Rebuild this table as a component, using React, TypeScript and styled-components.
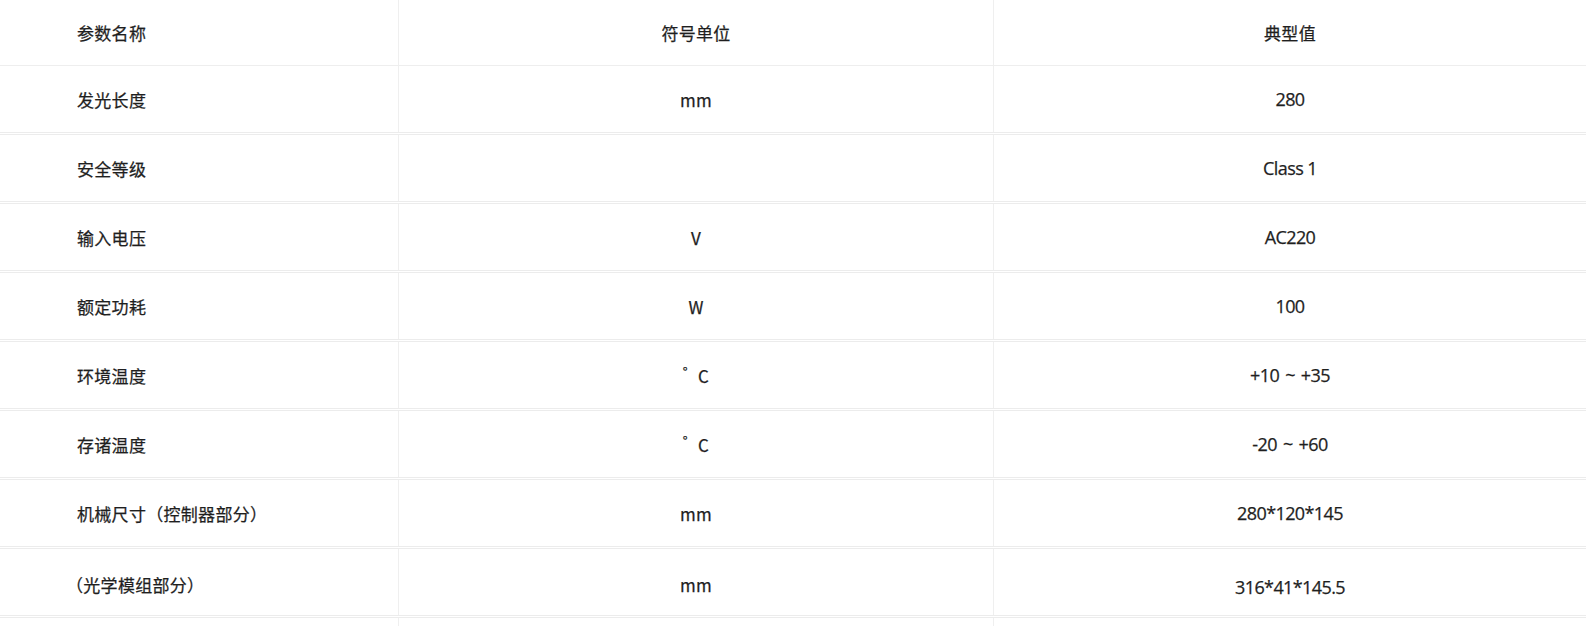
import React from 'react'
import styled, { createGlobalStyle } from 'styled-components'

const GlobalStyle = createGlobalStyle`
  html, body {
    margin: 0;
    padding: 0;
    background: #fff;
  }
  body {
    font-family: "Noto Sans CJK SC", "Noto Sans", sans-serif;
    color: #333;
  }
`

const Table = styled.div`
  width: 100%;
  display: flex;
  flex-direction: column;
`

const Row = styled.div<{ head?: boolean }>`
  display: grid;
  grid-template-columns: 399px 595px 1fr;
  height: ${(p) => (p.head ? '65px' : '66px')};
  border-bottom: ${(p) => (p.head ? '1px solid #eeeeee' : '3px double #ececec')};
`

const Cell = styled.div<{ align?: 'left' | 'center'; latin?: boolean; drop?: number; indent?: number }>`
  display: flex;
  align-items: center;
  justify-content: ${(p) => (p.align === 'left' ? 'flex-start' : 'center')};
  padding-left: ${(p) => (p.align === 'left' ? `${p.indent ?? 77}px` : '0')};
  padding-top: ${(p) => p.drop || 0}px;
  box-sizing: border-box;
  font-size: ${(p) => (p.latin ? '18px' : '17px')};
  font-weight: 400;
  letter-spacing: ${(p) => (p.latin ? '-0.6px' : '0.3px')};
  font-family: ${(p) =>
    p.latin ? '"Open Sans", "Noto Sans CJK SC", sans-serif' : '"Noto Sans CJK SC", "Noto Sans", sans-serif'};
  color: #1f1f1f;
  -webkit-text-stroke: 0.25px #1f1f1f;
  border-right: 1px solid #efefef;
  &:last-child {
    border-right: 0;
  }
`

const Degree = styled.span`
  margin-right: 10px;
  font-size: 13px;
  position: relative;
  top: -4px;
`

const Tilde = styled.span`
  margin: 0 6px;
`

interface Item {
  name: string
  unit: React.ReactNode
  value: React.ReactNode
}

const celsius = (
  <>
    <Degree>°</Degree>C
  </>
)

const range = (a: string, b: string) => (
  <>
    {a}
    <Tilde>~</Tilde>
    {b}
  </>
)

const rows: Item[] = [
  { name: '发光长度', unit: 'mm', value: '280' },
  { name: '安全等级', unit: '', value: 'Class 1' },
  { name: '输入电压', unit: 'V', value: 'AC220' },
  { name: '额定功耗', unit: 'W', value: '100' },
  { name: '环境温度', unit: celsius, value: range('+10', '+35') },
  { name: '存诸温度', unit: celsius, value: range('-20', '+60') },
  { name: '机械尺寸（控制器部分）', unit: 'mm', value: '280*120*145' },
  { name: '（光学模组部分）', unit: 'mm', value: '316*41*145.5' },
]

export default function App() {
  return (
    <>
      <GlobalStyle />
      <Table>
        <Row head>
          <Cell align="left">参数名称</Cell>
          <Cell>符号单位</Cell>
          <Cell>典型值</Cell>
        </Row>
        {rows.map((r, i) => {
          const isLast = i === rows.length - 1
          return (
            <Row key={i}>
              <Cell align="left" indent={r.name.startsWith('（') ? 66 : 77} drop={isLast ? 4 : 0}>
                {r.name}
              </Cell>
              <Cell drop={isLast ? 4 : 0}>{r.unit}</Cell>
              <Cell latin drop={isLast ? 9 : 0}>{r.value}</Cell>
            </Row>
          )
        })}
        <Row>
          <Cell align="left" />
          <Cell />
          <Cell />
        </Row>
      </Table>
    </>
  )
}
